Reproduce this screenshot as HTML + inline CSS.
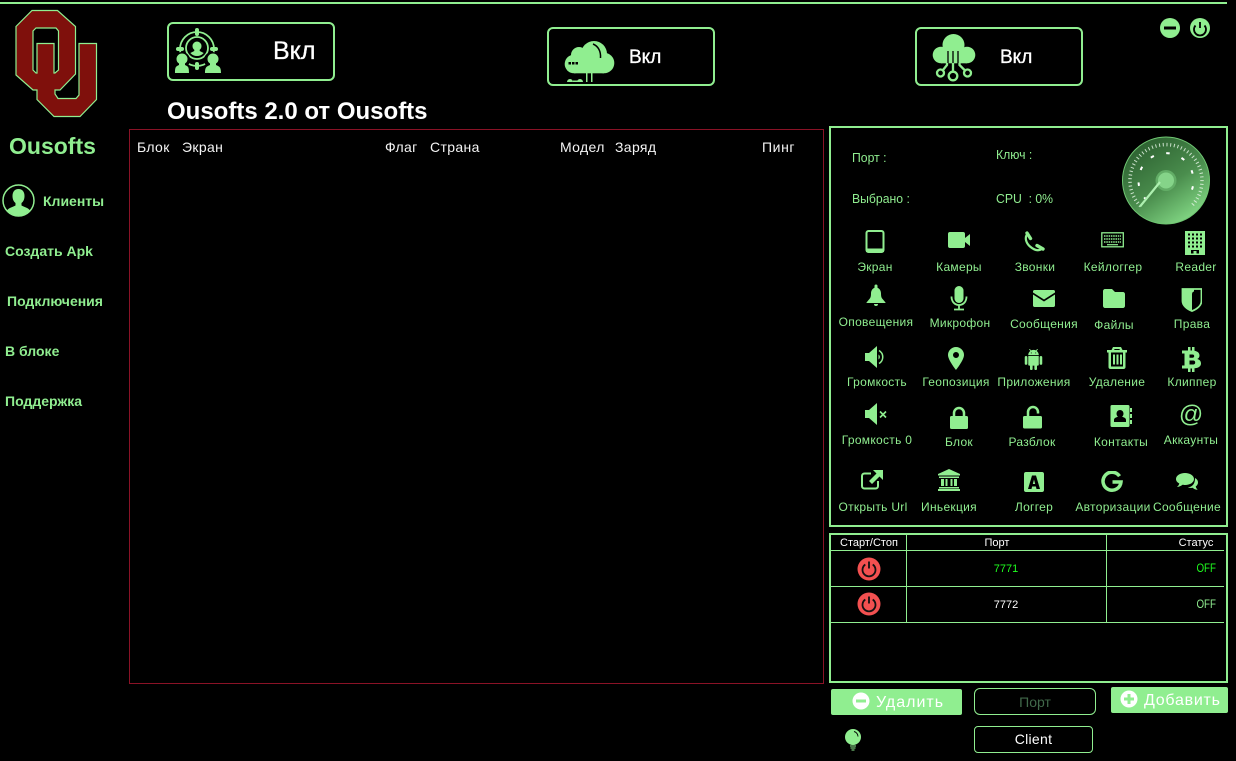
<!DOCTYPE html>
<html lang="ru">
<head>
<meta charset="utf-8">
<title>Ousofts</title>
<style>
html,body{margin:0;padding:0;background:#000}
#p{position:relative;width:1236px;height:761px;background:#000;overflow:hidden;font-family:"Liberation Sans",sans-serif;color:#90ee90}
#p div,#p svg{position:absolute}
.b{border:2px solid #90ee90;box-sizing:border-box;border-radius:6px}
.n{font-weight:bold;font-size:14px;white-space:nowrap;line-height:16px}
.h{color:#f4f4f4;font-size:14px;line-height:16px;letter-spacing:.35px;top:139px;white-space:nowrap}
.i{font-size:13px;line-height:14px;white-space:nowrap;transform:scaleX(.94);transform-origin:left}
.l{width:110px;text-align:center;font-size:12px;line-height:14px;letter-spacing:.3px;white-space:nowrap}
.v{color:#fff;font-size:19px;line-height:22px;white-space:nowrap;-webkit-text-stroke:.3px #fff}
.t{font-size:11px;line-height:14px;text-align:center;white-space:nowrap}
.o{font-size:11.500px;line-height:14px;white-space:nowrap;text-align:right;width:60px;left:1156px;transform:scaleX(.85);transform-origin:right}
.f{fill:#90ee90}
</style>
</head>
<body>
<div id="p">
<div style="left:0;top:2px;width:1227px;height:2px;background:#90ee90"></div>

<svg style="left:0;top:0" width="120" height="125" viewBox="0 0 120 125"><path fill="#7f100c" fill-rule="evenodd" stroke="#90ee90" stroke-width="1.200" d="M32 10.500L57.500 10.500L75.500 26.500L75.500 74L60 90L55 90L55 94L58 98.500L76 98.500L79 95L79 43.500L96.500 43.500L96.500 99.500L80 116.500L54 116.500L37 99.500L37 90L33 90L16 75L16 26.500ZM36 28L56 28L58.500 31L58.500 70L55 73L54 73L54 43.500L37 43.500L37 73L36 73L33 70L33 31Z"/></svg>

<div style="left:9px;top:132px;font-size:23px;line-height:28px;font-weight:bold">Ousofts</div>
<svg style="left:2px;top:184px" width="33" height="33" viewBox="0 0 33 33"><circle cx="16.500" cy="16.500" r="15.500" fill="none" stroke="#90ee90" stroke-width="1.500"/><path class="f" d="M16.500 5c-4 0-6 3-6 7 0 3 1 5.500 3 7v2.500c-2.500 1.500-6.500 2-8.500 5 3 3 7 5 11.500 5s8.500-2 11.500-5c-2-3-6-3.500-8.500-5V19c2-1.500 3-4 3-7 0-4-2-7-6-7z"/></svg>
<div class="n" style="left:43px;top:193px">Клиенты</div>
<div class="n" style="left:5px;top:243px">Создать Apk</div>
<div class="n" style="left:7px;top:293px">Подключения</div>
<div class="n" style="left:5px;top:343px">В блоке</div>
<div class="n" style="left:5px;top:393px">Поддержка</div>

<div class="b" style="left:167px;top:22px;width:168px;height:59px"></div>
<div class="b" style="left:547px;top:27px;width:168px;height:59px"></div>
<div class="b" style="left:915px;top:27px;width:168px;height:59px"></div>

<svg style="left:170px;top:24px" width="56" height="56" viewBox="0 0 56 56">
<circle cx="27" cy="25" r="17" fill="none" stroke="#90ee90" stroke-width="1.800"/>
<circle cx="27" cy="24" r="11" fill="#000" stroke="#90ee90" stroke-width="1.800"/>
<path class="f" d="M27 17.500a4.500 4.500 0 0 0-4.500 4.500c0 1.800.7 3 1.800 3.800v1.200l-4 2a9 9 0 0 0 13.400 0l-4-2v-1.200c1.100-.8 1.800-2 1.800-3.800a4.500 4.500 0 0 0-4.500-4.500z"/>
<rect class="f" x="25" y="4" width="4" height="8" rx="2"/><rect class="f" x="25" y="38" width="4" height="8" rx="2"/>
<rect class="f" x="6" y="23" width="8" height="4" rx="2"/><rect class="f" x="40" y="23" width="8" height="4" rx="2"/>
<circle cx="12" cy="36" r="8" fill="#000"/><circle cx="42" cy="36" r="8" fill="#000"/>
<path class="f" d="M12 29.500a5.500 5.500 0 0 0-5.500 5.500c0 2 .8 3.500 2.500 4.500v1.500c-3 1.500-4 1.500-4 8h14c0-6.500-1-6.500-4-8v-1.500c1.700-1 2.500-2.500 2.500-4.500a5.500 5.500 0 0 0-5.500-5.500z"/>
<path class="f" d="M43 29.500a5.500 5.500 0 0 0-5.500 5.500c0 2 .8 3.500 2.500 4.500v1.500c-3 1.500-5 1.500-5 8h16c0-6.500-2-6.500-5-8v-1.500c1.700-1 2.500-2.500 2.500-4.500a5.500 5.500 0 0 0-5.500-5.500z"/>
</svg>
<div class="v" style="left:273px;top:37px;font-size:25px;line-height:28px">Вкл</div>

<svg style="left:555px;top:30px" width="75" height="54" viewBox="0 0 75 54">
<circle class="f" cx="39" cy="24" r="13"/><circle class="f" cx="24" cy="25" r="8"/><circle class="f" cx="19" cy="34" r="9.300"/><circle class="f" cx="49" cy="33" r="10.300"/>
<rect class="f" x="19" y="28" width="30" height="15.300"/>
<path d="M38 14C43 16 46 21 45.500 28" fill="none" stroke="#000" stroke-width="1.500"/>
<rect x="13.500" y="32" width="2.500" height="2.500" fill="#000"/><rect x="17" y="32" width="2.500" height="2.500" fill="#000"/><rect x="20.500" y="32" width="2.500" height="2.500" fill="#000"/>
<rect class="f" x="31" y="43" width="1.500" height="9"/><rect class="f" x="36" y="43" width="1.500" height="9"/>
<path class="f" d="M12 52a3 3 0 0 1 6 0zM22 52a3 3 0 0 1 6 0z"/><rect class="f" x="18" y="50.500" width="5" height="1.500"/>
</svg>
<div class="v" style="left:629px;top:47px">Вкл</div>

<svg style="left:920px;top:28px" width="70" height="58" viewBox="0 0 70 58">
<circle class="f" cx="33.500" cy="17" r="11"/><circle class="f" cx="21" cy="27" r="8.300"/><circle class="f" cx="47" cy="27" r="8.300"/>
<rect class="f" x="21" y="20" width="26" height="15.300"/>
<path d="M28 23V36M33 23V36M38 23V36" stroke="#000" stroke-width="1.300"/>
<g fill="none" stroke="#90ee90" stroke-width="2.300"><path d="M33 35V43.500M27 35V37L23 42M39.500 35V37L44.500 42"/><circle cx="20.500" cy="45" r="3.500"/><circle cx="33" cy="48" r="4.300"/><circle cx="47.500" cy="45" r="3.500"/></g>
</svg>
<div class="v" style="left:1000px;top:47px">Вкл</div>

<svg style="left:1159px;top:17px" width="52" height="22" viewBox="0 0 52 22">
<circle class="f" cx="11" cy="11" r="10"/><rect x="5" y="9.500" width="12" height="3" fill="#000"/>
<circle class="f" cx="41" cy="11" r="10"/><path d="M36.500 8.500a6 6 0 1 0 9 0M41 5v6" fill="none" stroke="#000" stroke-width="1.800"/>
</svg>

<div style="left:167px;top:98px;font-size:24px;line-height:28px;font-weight:bold;color:#fff;white-space:nowrap">Ousofts 2.0 от Ousofts</div>

<div style="left:129px;top:129px;width:695px;height:555px;box-sizing:border-box;border:1px solid #8a1226"></div>
<div class="h" style="left:137px">Блок</div>
<div class="h" style="left:182px">Экран</div>
<div class="h" style="left:385px">Флаг</div>
<div class="h" style="left:430px">Страна</div>
<div class="h" style="left:560px">Модел</div>
<div class="h" style="left:615px">Заряд</div>
<div class="h" style="left:762px;letter-spacing:.6px">Пинг</div>

<div style="left:829px;top:126px;width:399px;height:401px;box-sizing:border-box;border:2px solid #90ee90"></div>
<div class="i" style="left:852px;top:151px">Порт :</div>
<div class="i" style="left:996px;top:148px">Ключ :</div>
<div class="i" style="left:852px;top:192px">Выбрано :</div>
<div class="i" style="left:996px;top:192px">CPU&nbsp; : 0%</div>

<svg style="left:1120px;top:135px" width="92" height="92" viewBox="0 0 92 92">
<defs><linearGradient id="g" x1="0.200" y1="0.050" x2="0.800" y2="0.950"><stop offset="0" stop-color="#2c6030"/><stop offset=".55" stop-color="#4a8d4d"/><stop offset="1" stop-color="#84da86"/></linearGradient></defs>
<circle cx="46" cy="45.500" r="43.500" fill="url(#g)" stroke="#6fc672" stroke-width="1"/>
<path d="M20.500 71A36 36 0 1 1 71.500 71" fill="none" stroke="#e4f5e4" stroke-width="3.500" stroke-dasharray="1 2.700" opacity=".85"/>
<path d="M26.500 65A27.500 27.500 0 1 1 65.500 65" fill="none" stroke="#fff" stroke-width="2" stroke-dasharray="3.500 12.700"/>
<circle cx="46" cy="45.500" r="10.500" fill="#62ad66"/><circle cx="46" cy="45.500" r="8" fill="#85d489"/>
<path d="M40 47L20 71.500" stroke="#aef0b0" stroke-width="2.200"/>
</svg>

<!-- row 1 -->
<svg style="left:863px;top:230px" width="24" height="24" viewBox="0 0 24 24"><rect x="3.500" y="1" width="17" height="21" rx="2" fill="none" stroke="#90ee90" stroke-width="2"/><rect class="f" x="3" y="18.500" width="18" height="3.500"/></svg>
<svg style="left:947px;top:228px" width="24" height="24" viewBox="0 0 24 24"><path class="f" d="M18 10V6a2 2 0 0 0-2-2H3a2 2 0 0 0-2 2v12a2 2 0 0 0 2 2h13a2 2 0 0 0 2-2v-4l5 4V6z"/></svg>
<svg style="left:1022px;top:229px" width="24" height="24" viewBox="0 0 24 24"><path d="M6 4.500C2 8 4 14 8 17.500 12 21 16 22.500 20 20" fill="none" stroke="#90ee90" stroke-width="2.200"/><path d="M5 4L8.500 9.500M15 16.500L21 20" stroke="#90ee90" stroke-width="3.400" stroke-linecap="round"/></svg>
<svg style="left:1101px;top:232px" width="24" height="16" viewBox="0 0 24 16"><rect x=".8" y=".8" width="21.500" height="14" fill="none" stroke="#90ee90" stroke-width="1.300"/><path d="M3 4h17M3 7h17M3 10h17" stroke="#90ee90" stroke-width="1.500" stroke-dasharray="1.500 .8"/><path d="M6 12.700h11" stroke="#90ee90" stroke-width="1.200"/></svg>
<svg style="left:1184px;top:230px" width="22" height="25" viewBox="0 0 22 25"><path class="f" fill-rule="evenodd" d="M1 1h20v24H1zM4 3.500v2h2v-2zm4 0v2h2v-2zm4 0v2h2v-2zm4 0v2h2v-2zM4 7.500v2h2v-2zm4 0v2h2v-2zm4 0v2h2v-2zm4 0v2h2v-2zM4 11.500v2h2v-2zm4 0v2h2v-2zm4 0v2h2v-2zm4 0v2h2v-2zM4 15.500v2h2v-2zm4 0v2h2v-2zm4 0v2h2v-2zm4 0v2h2v-2zM7 20v3.500h2.500V21h3v2.500H15V20z"/></svg>
<div class="l" style="left:820px;top:260px">Экран</div>
<div class="l" style="left:904px;top:260px">Камеры</div>
<div class="l" style="left:980px;top:260px">Звонки</div>
<div class="l" style="left:1058px;top:260px">Кейлоггер</div>
<div class="l" style="left:1141px;top:260px">Reader</div>

<!-- row 2 -->
<svg style="left:864px;top:283px" width="24" height="24" viewBox="0 0 24 24"><path class="f" d="M12 23a2 2 0 0 0 2-2h-4a2 2 0 0 0 2 2zm7-6.500c-1.500-1.500-2-3-2-6 0-3-1.500-5-3.500-5.800V3a1.500 1.500 0 0 0-3 0v1.700C8.500 5.500 7 7.500 7 10.500c0 3-.5 4.500-2 6L2.500 19.500v.5h19v-.5z"/></svg>
<svg style="left:947px;top:285px" width="24" height="26" viewBox="0 0 24 26"><rect class="f" x="7.500" y="1" width="9" height="17" rx="4.500"/><path d="M4.500 11.500c0 5 3 8.500 7.500 8.500s7.500-3.500 7.500-8.500M12 20v4M7 24.500h10" fill="none" stroke="#90ee90" stroke-width="1.800"/></svg>
<svg style="left:1032px;top:286px" width="24" height="24" viewBox="0 0 24 24"><path class="f" d="M1 6.500l11 7 11-7V5.500C23 4.700 22.300 4 21.500 4h-19C1.700 4 1 4.700 1 5.500zM1 8.500v11C1 20.300 1.700 21 2.500 21h19c.8 0 1.500-.7 1.500-1.500v-11l-11 7z"/></svg>
<svg style="left:1102px;top:286px" width="24" height="24" viewBox="0 0 24 24"><path class="f" d="M3 3h7l3 3h8c1 0 2 1 2 2v12c0 1-1 2-2 2H3c-1 0-2-1-2-2V5c0-1 1-2 2-2z"/></svg>
<svg style="left:1180px;top:287px" width="22" height="26" viewBox="0 0 22 26"><path fill="none" stroke="#90ee90" stroke-width="1.800" d="M2.500 2h19v12c0 4.500-4.500 8-9.500 10-5-2-9.500-5.500-9.500-10z"/><path class="f" d="M2.500 2H14V4.500c-2 .5-2 2-2 4V24c-5-2-9.500-5.500-9.500-10z"/></svg>
<div class="l" style="left:821px;top:315px">Оповещения</div>
<div class="l" style="left:905px;top:316px">Микрофон</div>
<div class="l" style="left:989px;top:317px">Сообщения</div>
<div class="l" style="left:1059px;top:318px">Файлы</div>
<div class="l" style="left:1137px;top:317px">Права</div>

<!-- row 3 -->
<svg style="left:864px;top:345px" width="24" height="24" viewBox="0 0 24 24"><path class="f" d="M1 8h4l8-7v22l-8-7H1z"/><path d="M15 5.500a7.500 7.500 0 0 1 0 13" fill="none" stroke="#90ee90" stroke-width="1.500"/><path class="f" d="M14.500 9.500a3 3 0 0 1 0 5z"/></svg>
<svg style="left:945px;top:346px" width="22" height="24" viewBox="0 0 22 24"><path class="f" fill-rule="evenodd" d="M11 1a8 8 0 0 0-8 8c0 5 8 15 8 15s8-10 8-15a8 8 0 0 0-8-8zm0 5a3 3 0 1 1 0 6 3 3 0 0 1 0-6z"/></svg>
<svg style="left:1023px;top:348px" width="21" height="23" viewBox="0 0 24 24"><path class="f" d="M6 18a1 1 0 0 0 1 1h1v3.500a1.500 1.500 0 0 0 3 0V19h2v3.500a1.500 1.500 0 0 0 3 0V19h1a1 1 0 0 0 1-1V8H6zM3.500 8A1.500 1.500 0 0 0 2 9.500v7a1.500 1.500 0 0 0 3 0v-7A1.500 1.500 0 0 0 3.500 8zm17 0A1.500 1.500 0 0 0 19 9.500v7a1.500 1.500 0 0 0 3 0v-7A1.500 1.500 0 0 0 20.500 8zM15.530 2.160l1.300-1.300a.5.500 0 0 0-.7-.7l-1.480 1.480A5.840 5.840 0 0 0 12 1c-.96 0-1.860.23-2.660.63L7.850.15a.5.500 0 0 0-.7.7l1.310 1.310A5.980 5.980 0 0 0 6 7h12a5.980 5.980 0 0 0-2.470-4.840zM10 5H9V4h1zm5 0h-1V4h1z"/></svg>
<svg style="left:1106px;top:346px" width="22" height="24" viewBox="0 0 22 24"><path class="f" fill-rule="evenodd" d="M7 1h8l1.500 3H21v2.500h-1.500V21c0 1.200-.8 2-2 2h-13c-1.200 0-2-.8-2-2V6.500H1V4h4.500zM8 4h6l-.7-1H8.700zM5 6.500V20.500h12V6.500zM7 8.500h2v10H7zm3.500 0h2v10h-2zm3.500 0h2v10h-2z"/></svg>
<svg style="left:1181px;top:347px" width="20" height="25" viewBox="0 0 20 25"><path class="f" fill-rule="evenodd" d="M7 0h2.500v3.500H11V0h2.500v3.700c2.800.5 5 2 5 4.800 0 1.800-1 3-2.300 3.500 2.300.6 3.800 2 3.800 4.500 0 3-2.800 4.500-6.500 4.800V25H11v-3.500H9.500V25H7v-3.500H1v-3h2.500V6.500H1v-3h6zM8.500 7.500v3.200h3c1 0 1.700-.6 1.700-1.600s-.7-1.600-1.700-1.600zm0 6v4h3.700c1.200 0 2-.8 2-2s-.8-2-2-2z"/></svg>
<div class="l" style="left:822px;top:375px">Громкость</div>
<div class="l" style="left:901px;top:375px">Геопозиция</div>
<div class="l" style="left:979px;top:375px">Приложения</div>
<div class="l" style="left:1062px;top:375px">Удаление</div>
<div class="l" style="left:1137px;top:375px">Клиппер</div>

<!-- row 4 -->
<svg style="left:864px;top:402px" width="24" height="24" viewBox="0 0 24 24"><path class="f" d="M1 8h4l8-7v22l-8-7H1z"/><path d="M16 9.500l6 6M22 9.500l-6 6" stroke="#90ee90" stroke-width="1.600"/></svg>
<svg style="left:948px;top:406px" width="22" height="24" viewBox="0 0 22 24"><path d="M6 11V7a5 5 0 0 1 10 0v4" fill="none" stroke="#90ee90" stroke-width="2.500"/><rect class="f" x="2" y="10" width="18" height="13" rx="1.500"/></svg>
<svg style="left:1021px;top:405px" width="24" height="24" viewBox="0 0 24 24"><path d="M7 11V7a5 5 0 0 1 10 0v1.500" fill="none" stroke="#90ee90" stroke-width="2.500"/><rect class="f" x="2" y="11" width="19" height="12.500" rx="1.500"/></svg>
<svg style="left:1109px;top:404px" width="24" height="24" viewBox="0 0 24 24"><path class="f" fill-rule="evenodd" d="M3 1h16c1 0 1.500.5 1.500 1.500v19c0 1-.5 1.500-1.500 1.500H3c-1 0-1.500-.5-1.500-1.500v-19C1.500 1.500 2 1 3 1zM11 6a3.500 3.500 0 0 0-3.500 3.500c0 1.500.5 2.500 1.500 3.200-2.500.8-4 1.500-4 3.300v2h12v-2c0-1.800-1.500-2.500-4-3.300 1-.7 1.500-1.700 1.500-3.200A3.500 3.500 0 0 0 11 6z"/><rect class="f" x="21" y="4" width="2" height="4"/><rect class="f" x="21" y="10" width="2" height="4"/><rect class="f" x="21" y="16" width="2" height="4"/></svg>
<div style="left:1176px;top:400px;width:30px;text-align:center;font-size:24px;line-height:30px">@</div>
<div class="l" style="left:822px;top:433px">Громкость 0</div>
<div class="l" style="left:904px;top:435px">Блок</div>
<div class="l" style="left:977px;top:435px">Разблок</div>
<div class="l" style="left:1066px;top:435px">Контакты</div>
<div class="l" style="left:1136px;top:433px">Аккаунты</div>

<!-- row 5 -->
<svg style="left:860px;top:469px" width="24" height="22" viewBox="0 0 24 22"><path d="M11 4.500H4.500c-1.500 0-2.500 1-2.500 2.500v10c0 1.500 1 2.500 2.500 2.500h11c1.500 0 2.500-1 2.500-2.500v-5" fill="none" stroke="#90ee90" stroke-width="2"/><path class="f" d="M13 1h10v10l-3.500-3.500L12 15l-3-3 7.500-7.500z"/></svg>
<svg style="left:938px;top:469px" width="22" height="22" viewBox="0 0 22 22"><path class="f" d="M11 0L22 5v1.500H0V5zM1 7.500h20V9H1zM3 10h3v7H3zM7.500 10h2v7h-2zM12.500 10h2v7h-2zM16 10h3v7h-3zM1 18h20v1.500H1zM0 20h22v2H0z"/></svg>
<svg style="left:1023px;top:471px" width="22" height="22" viewBox="0 0 22 22"><path class="f" fill-rule="evenodd" d="M3 1h16c1.200 0 2 .8 2 2v16c0 1.200-.8 2-2 2H3c-1.200 0-2-.8-2-2V3c0-1.200.8-2 2-2zM9 4.500L5 18h3.500l.6-2.500h3.800l.6 2.500H17L13 4.500zM11 8.500l1.200 4.500H9.800z"/></svg>
<svg style="left:1101px;top:471px" width="22" height="22" viewBox="0 0 22 22"><path d="M18.500 5.200A9 9 0 1 0 20 11H11.500" fill="none" stroke="#90ee90" stroke-width="3.500"/></svg>
<svg style="left:1175px;top:471px" width="24" height="21" viewBox="0 0 24 21"><path class="f" d="M10 2c5 0 9 2.500 9 6s-4 6-9 6c-1 0-1.500 0-2.500-.2C6 15 4 16 2 16c1-1 2-2 2.300-3.500C2 11.300 1 9.800 1 8c0-3.500 4-6 9-6z"/><path class="f" d="M20 7c2 1 3 2.500 3 4.500 0 1.800-1 3-2.300 4 .3 1.300 1 2.300 2 3.300-2 0-3.800-.7-5-2-1.500.4-3.500.2-5-.5 4 0 7.500-3 7.300-9.300z"/></svg>
<div class="l" style="left:818px;top:500px">Открыть Url</div>
<div class="l" style="left:894px;top:500px">Иньекция</div>
<div class="l" style="left:979px;top:500px">Логгер</div>
<div class="l" style="left:1058px;top:500px">Авторизации</div>
<div class="l" style="left:1132px;top:500px">Сообщение</div>

<!-- table -->
<div style="left:829px;top:533px;width:399px;height:150px;box-sizing:border-box;border:2px solid #90ee90"></div>
<div style="left:831px;top:550px;width:393px;height:1px;background:#90ee90"></div>
<div style="left:831px;top:586px;width:393px;height:1px;background:#90ee90"></div>
<div style="left:831px;top:622px;width:393px;height:1px;background:#90ee90"></div>
<div style="left:906px;top:535px;width:1px;height:87px;background:#90ee90"></div>
<div style="left:1106px;top:535px;width:1px;height:87px;background:#90ee90"></div>
<div class="t" style="left:829px;top:536px;width:80px;color:#fff">Старт/Стоп</div>
<div class="t" style="left:957px;top:536px;width:80px;color:#fff">Порт</div>
<div class="t" style="left:1156px;top:536px;width:80px;color:#fff">Статус</div>
<svg style="left:857px;top:557px" width="24" height="60" viewBox="0 0 24 60">
<circle cx="12" cy="12" r="11.500" fill="#f25050"/><path d="M8.300 7.500a6.500 6.500 0 1 0 7.400 0M12 4.500v7" fill="none" stroke="#111" stroke-width="1.800"/>
<circle cx="12" cy="47" r="11.500" fill="#f25050"/><path d="M8.300 42.500a6.500 6.500 0 1 0 7.400 0M12 39.500v7" fill="none" stroke="#111" stroke-width="1.800"/>
</svg>
<div class="t" style="left:966px;top:562px;width:80px;color:#1fff1f">7771</div>
<div class="t" style="left:966px;top:598px;width:80px;color:#fff">7772</div>
<div class="o" style="top:562px;color:#1fff1f">OFF</div>
<div class="o" style="top:598px">OFF</div>

<!-- buttons -->
<div style="left:831px;top:689px;width:131px;height:26px;background:#90ee90;border-radius:2px"></div>
<svg style="left:852px;top:692px" width="18" height="18" viewBox="0 0 18 18"><circle cx="9" cy="9" r="8.500" fill="#fff"/><rect x="4" y="7.500" width="10" height="3" fill="#90ee90"/></svg>
<div style="left:876px;top:693px;color:#fff;font-size:16px;line-height:20px;letter-spacing:1px;white-space:nowrap">Удалить</div>
<div class="b" style="left:974px;top:688px;width:122px;height:27px;border-width:1.500px"></div>
<div style="left:974px;top:694px;width:122px;text-align:center;font-size:14px;line-height:16px;color:#41694a">Порт</div>
<div style="left:1111px;top:687px;width:117px;height:26px;background:#90ee90;border-radius:2px"></div>
<svg style="left:1120px;top:690px" width="18" height="18" viewBox="0 0 18 18"><circle cx="9" cy="9" r="8.500" fill="#fff"/><path d="M9 4v10M4 9h10" stroke="#90ee90" stroke-width="3"/></svg>
<div style="left:1144px;top:691px;color:#fff;font-size:16px;line-height:20px;letter-spacing:.75px;white-space:nowrap">Добавить</div>
<svg style="left:844px;top:728px" width="18" height="24" viewBox="0 0 18 24"><circle class="f" cx="9" cy="9" r="8"/><path d="M10 3.500a5.500 5.500 0 0 1 4 5" fill="none" stroke="#000" stroke-width="1"/><path d="M6 18h6M6.500 20h5M7.500 22h3" stroke="#90ee90" stroke-width="1"/></svg>
<div class="b" style="left:974px;top:726px;width:119px;height:27px;border-width:1.500px;border-radius:4px"></div>
<div style="left:974px;top:731px;width:119px;text-align:center;font-size:14px;line-height:16px;color:#fff;letter-spacing:.3px">Client</div>
</div>
</body>
</html>
